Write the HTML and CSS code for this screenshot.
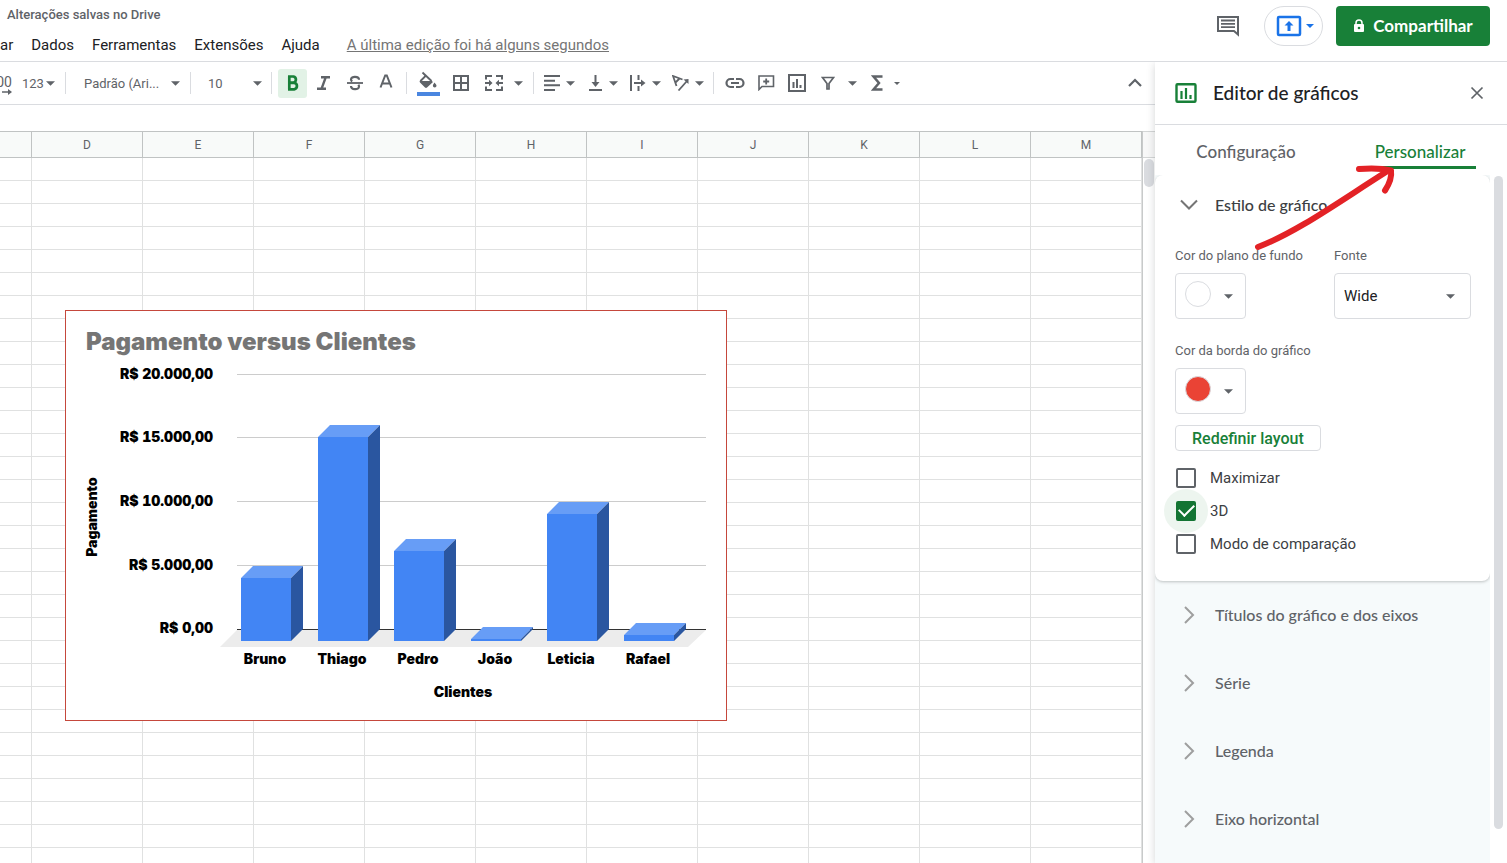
FILE: index.html
```html
<!DOCTYPE html>
<html lang="pt-BR">
<head>
<meta charset="utf-8">
<title>Planilha</title>
<link rel="stylesheet" href="styles.css">
</head>
<body>
<header class="top">
  <div class="top-left">
    <div class="saved">Alterações salvas no Drive</div>
    <nav class="menu">
      <button class="menu-item">ar</button>
      <button class="menu-item">Dados</button>
      <button class="menu-item">Ferramentas</button>
      <button class="menu-item">Extensões</button>
      <button class="menu-item">Ajuda</button>
      <a class="last-edit" href="#">A última edição foi há alguns segundos</a>
    </nav>
  </div>
  <div class="top-right">
    <button class="plain" aria-label="Comentários">
      <svg width="24" height="24" viewBox="0 0 24 24" fill="none" stroke="#5f6368" stroke-width="2"><path d="M2 3h20v17.500l-4-3.500H2z"/><path d="M5 6.500h14M5 9.800h14M5 13.200h14" stroke-width="1.800"/></svg>
    </button>
    <button class="present" aria-label="Apresentar">
      <svg width="26" height="22" viewBox="0 0 26 22"><rect x="2" y="2" width="22" height="18" rx="1" fill="none" stroke="#1a73e8" stroke-width="2.500"/><path d="M13 6l4.500 4.500h-3V16h-3v-5.500h-3z" fill="#1a73e8"/></svg>
      <svg width="8" height="4" viewBox="0 0 8 4"><path d="M0 0h8L4 4z" fill="#1a73e8"/></svg>
    </button>
    <button class="share">
      <svg width="12" height="14" viewBox="0 0 12 14"><path d="M3 6V4a3 3 0 0 1 6 0v2" fill="none" stroke="#fff" stroke-width="1.500"/><rect x="1" y="5" width="10" height="8" rx="1" fill="#fff"/><circle cx="6" cy="9" r="1.300" fill="#188038"/></svg>
      <span class="share-text">Compartilhar</span>
    </button>
  </div>
</header>

<div class="workspace">
  <main class="main">
    <div class="toolbar">
      <div class="group">
        <button class="decimals" aria-label="Aumentar casas decimais">
          <span>00</span>
          <svg width="10" height="6" viewBox="0 0 10 6"><path d="M0 3h7" stroke="#5f6368" stroke-width="1.500"/><path d="M6 0l4 3-4 3z" fill="#5f6368"/></svg>
        </button>
        <button class="format">123 <svg class="caret" viewBox="0 0 8 4"><path d="M0 0h8L4 4z"/></svg></button>
      </div>
      <span class="sep"></span>
      <label class="pick pick-font"><select aria-label="Fonte"><option>Padrão (Ari...</option></select><svg class="caret" viewBox="0 0 8 4"><path d="M0 0h8L4 4z"/></svg></label>
      <span class="sep"></span>
      <label class="pick pick-size"><select aria-label="Tamanho da fonte"><option>10</option></select><svg class="caret" viewBox="0 0 8 4"><path d="M0 0h8L4 4z"/></svg></label>
      <span class="sep"></span>
      <div class="group">
        <button class="tool tool-on" aria-label="Negrito"><svg width="14" height="16" viewBox="0 0 14 16"><path d="M2 1.500h5.500a3.200 3.200 0 0 1 0 6.200H3M2.200 7.800h6a3.300 3.300 0 0 1 0 6.500H2M3.300 1.500v12.800" fill="none" stroke="#188038" stroke-width="2.700"/></svg></button>
        <button class="tool" aria-label="Itálico"><svg width="16" height="16" viewBox="0 0 16 16" fill="none" stroke="#5f6368" stroke-width="2.400"><path d="M5 2.200h9M1 13.800h9M9.800 2.200L5.500 13.800"/></svg></button>
        <button class="tool" aria-label="Tachado"><svg width="16" height="16" viewBox="0 0 16 16" fill="none" stroke="#5f6368"><path d="M0 8h16" stroke-width="1.800"/><path d="M12 4.800C12 1 4 .800 4 4.500c0 1 .500 1.500 1.200 2M4 11c0 4 8 4.300 8 .500 0-.800-.300-1.300-.700-1.800" stroke-width="2.200"/></svg></button>
        <button class="tool" aria-label="Cor do texto"><svg width="14" height="18" viewBox="0 0 14 18"><path d="M1.500 13.500L6.200 1.500h1.600l4.700 12M3.500 9.500h7" fill="none" stroke="#5f6368" stroke-width="2"/></svg></button>
      </div>
      <span class="sep"></span>
      <div class="group group-wide">
        <button class="tool" aria-label="Cor de preenchimento"><svg width="24" height="26" viewBox="0 0 24 26"><path d="M6 3l11 9-6 5.500a1.500 1.500 0 0 1-2 0L4 12.500a1.500 1.500 0 0 1 0-2L9 6" fill="#5f6368"/><path d="M10 5.500L15 11H5z" fill="#fff"/><path d="M6.500 2.500L15.500 11" stroke="#5f6368" stroke-width="1.800"/><path d="M10 5.500L4.500 11" stroke="#5f6368" stroke-width="1.800"/><path d="M18.500 12.500c1.500 2 2 2.600 2 3.200a1.800 1.800 0 0 1-3.600 0c0-.600.300-1.200 1.600-3.200z" fill="#5f6368"/><path d="M1 22h23v4H1z" fill="#4a86e0"/></svg></button>
        <button class="tool" aria-label="Bordas"><svg width="16" height="16" viewBox="0 0 16 16"><path d="M1 1h14v14H1zM8 1v14M1 8h14" fill="none" stroke="#5f6368" stroke-width="2"/></svg></button>
        <button class="tool" aria-label="Mesclar células"><svg width="20" height="18" viewBox="0 0 20 18"><path d="M8 2H2v3.500M12 2h6v3.500M2 12.500V16h6M18 12.500V16h-6M1 9h5M19 9h-5" fill="none" stroke="#5f6368" stroke-width="2"/><path d="M5 5.800L8.500 9 5 12.200zM15 5.800L11.500 9l3.500 3.200z" fill="#5f6368"/></svg></button>
        <button class="drop" aria-label="Opções de mesclagem"><svg class="caret" viewBox="0 0 8 4"><path d="M0 0h8L4 4z"/></svg></button>
      </div>
      <span class="sep"></span>
      <div class="group group-split">
        <button class="split" aria-label="Alinhamento horizontal"><svg width="18" height="18" viewBox="0 0 18 18"><path d="M1 2h16M1 6.700h11M1 11.300h16M1 16h11" stroke="#5f6368" stroke-width="2"/></svg><svg class="caret" viewBox="0 0 8 4"><path d="M0 0h8L4 4z"/></svg></button>
        <button class="split" aria-label="Alinhamento vertical"><svg width="18" height="16" viewBox="0 0 18 16"><path d="M3 15h13M9.500 0v8" stroke="#5f6368" stroke-width="2"/><path d="M5.500 7h8l-4 5z" fill="#5f6368"/></svg><svg class="caret" viewBox="0 0 8 4"><path d="M0 0h8L4 4z"/></svg></button>
        <button class="split" aria-label="Ajuste de texto"><svg width="18" height="16" viewBox="0 0 18 16"><path d="M2 0v16M9.500 0v5M9.500 11v5M5 8h8" stroke="#5f6368" stroke-width="2"/><path d="M12 4.500L16.500 8 12 11.500z" fill="#5f6368"/></svg><svg class="caret" viewBox="0 0 8 4"><path d="M0 0h8L4 4z"/></svg></button>
        <button class="split" aria-label="Rotação de texto"><svg width="18" height="16" viewBox="0 0 18 16" fill="none" stroke="#5f6368" stroke-width="1.800"><path d="M4.500 11L1 1l9.500 3.500M3.500 7.500l4-4"/><path d="M6.500 15.500L15 6"/><path d="M11.500 4.500l5-.500v5z" fill="#5f6368" stroke="none"/></svg><svg class="caret" viewBox="0 0 8 4"><path d="M0 0h8L4 4z"/></svg></button>
      </div>
      <span class="sep"></span>
      <div class="group">
        <button class="tool" aria-label="Inserir link"><svg width="20" height="12" viewBox="0 0 20 12"><path d="M9 2H5.500a4 4 0 0 0 0 8H9M11 2h3.500a4 4 0 0 1 0 8H11M6 6h8" fill="none" stroke="#5f6368" stroke-width="2.200"/></svg></button>
        <button class="tool" aria-label="Inserir comentário"><svg width="18" height="16" viewBox="0 0 18 16"><path d="M2 14.500V1h14.500v10.500H5z" fill="none" stroke="#5f6368" stroke-width="1.600"/><path d="M9.200 3.500v6M6.200 6.500h6" stroke="#5f6368" stroke-width="1.800"/></svg></button>
        <button class="tool" aria-label="Inserir gráfico"><svg width="18" height="18" viewBox="0 0 18 18"><rect x="1" y="1" width="16" height="16" fill="none" stroke="#5f6368" stroke-width="2"/><path d="M5.500 8v6M9 5v9M12.500 11v3" stroke="#5f6368" stroke-width="2"/></svg></button>
        <button class="tool" aria-label="Filtro"><svg width="14" height="14" viewBox="0 0 14 14"><path d="M1.500 1.500h11L8 7.500V13H6V7.500z" fill="none" stroke="#5f6368" stroke-width="1.700"/></svg></button>
        <button class="drop drop-filter" aria-label="Opções de filtro"><svg class="caret" viewBox="0 0 8 4"><path d="M0 0h8L4 4z"/></svg></button>
        <button class="tool" aria-label="Funções"><svg width="12" height="16" viewBox="0 0 12 16"><path d="M11.500 1.500H2.500L8 8l-5.500 6.500h9" fill="none" stroke="#5f6368" stroke-width="2.500"/></svg></button>
        <button class="drop drop-more" aria-label="Mais funções"><svg class="caret-small" viewBox="0 0 8 4"><path d="M0 0h8L4 4z"/></svg></button>
      </div>
      <button class="tool collapse" aria-label="Ocultar menus"><svg width="14" height="10" viewBox="0 0 14 10"><path d="M1 8l6-6 6 6" fill="none" stroke="#5f6368" stroke-width="2.200"/></svg></button>
    </div>
    <div class="formula"></div>
    <div class="sheet">
      <table class="cells">
        <colgroup><col class="col-cut"><col span="10"></colgroup>
        <thead><tr><th></th><th>D</th><th>E</th><th>F</th><th>G</th><th>H</th><th>I</th><th>J</th><th>K</th><th>L</th><th>M</th></tr></thead>
        <tbody id="rows"></tbody>
      </table>
      <div class="sheet-scroll"><div class="sheet-scroll-head"></div><div class="sheet-thumb"></div></div>

      <svg class="chart" width="662" height="411" viewBox="0 0 662 411" role="img" aria-label="Pagamento versus Clientes">
        <rect x="0.500" y="0.500" width="661" height="410" fill="#fff" stroke="#c5483c"/>
        <text class="chart-title" x="21" y="40">Pagamento versus Clientes</text>
        <path d="M172 320h469l-18 17H155z" fill="#ececec"/>
        <path d="M172 64.500h469M172 127.500h469M172 191.500h469M172 255.500h469" stroke="#ccc"/>
        <path d="M172 319.500h469" stroke="#333"/>
        <g class="chart-value">
          <text x="148" y="69">R$ 20.000,00</text>
          <text x="148" y="132">R$ 15.000,00</text>
          <text x="148" y="196">R$ 10.000,00</text>
          <text x="148" y="260">R$ 5.000,00</text>
          <text x="148" y="323">R$ 0,00</text>
        </g>
        <path fill="#4285f4" d="M176 268h50v63h-50zM253 127h50v204h-50zM329 241h50v90h-50zM406 329h50v2h-50zM482 204h50v127h-50zM559 325h50v6h-50z"/>
        <path fill="#679df6" d="M176 268l12-12h50l-12 12zM253 127l12-12h50l-12 12zM329 241l12-12h50l-12 12zM406 329l12-12h50l-12 12zM482 204l12-12h50l-12 12zM559 325l12-12h50l-12 12z"/>
        <path fill="#2a56a0" d="M226 268l12-12v63l-12 12zM303 127l12-12v204l-12 12zM379 241l12-12v90l-12 12zM456 329l12-12v2l-12 12zM532 204l12-12v127l-12 12zM609 325l12-12v6l-12 12z"/>
        <g class="chart-name">
          <text x="200" y="354">Bruno</text>
          <text x="277" y="354">Thiago</text>
          <text x="353" y="354">Pedro</text>
          <text x="430" y="354">João</text>
          <text x="506" y="354">Leticia</text>
          <text x="583" y="354">Rafael</text>
          <text x="398" y="387">Clientes</text>
          <text transform="translate(32 207) rotate(-90)">Pagamento</text>
        </g>
      </svg>
    </div>
  </main>

  <aside class="panel">
    <div class="panel-head">
      <svg width="22" height="20" viewBox="0 0 22 20"><rect x="1.500" y="1.200" width="19" height="17.600" rx="1" fill="none" stroke="#188038" stroke-width="2.400"/><path d="M6.500 8v8M11 5v11M15.500 12v4" stroke="#188038" stroke-width="2.200"/></svg>
      <h2 class="panel-title">Editor de gráficos</h2>
      <button class="plain" aria-label="Fechar"><svg width="14" height="14" viewBox="0 0 14 14"><path d="M1.500 1.500l11 11M12.500 1.500l-11 11" stroke="#5f6368" stroke-width="1.700"/></svg></button>
    </div>
    <div class="tabs" role="tablist">
      <button class="tab" role="tab">Configuração</button>
      <button class="tab tab-on" role="tab" aria-selected="true">Personalizar</button>
    </div>
    <div class="panel-body">
      <div class="sections">
        <section class="card">
          <button class="section-head section-open"><svg width="18" height="12" viewBox="0 0 18 12"><path d="M1 1.500l8 8 8-8" fill="none" stroke="#757575" stroke-width="2"/></svg><span class="section-text">Estilo de gráfico</span></button>
          <div class="fields">
            <div class="field">
              <label class="field-label" for="bg">Cor do plano de fundo</label>
              <button class="color" id="bg"><span class="dot"></span><svg class="caret" viewBox="0 0 8 4"><path d="M0 0h8L4 4z"/></svg></button>
            </div>
            <div class="field">
              <label class="field-label" for="font">Fonte</label>
              <div class="pick pick-wide"><select id="font"><option>Wide</option></select><svg class="caret" viewBox="0 0 8 4"><path d="M0 0h8L4 4z"/></svg></div>
            </div>
            <div class="field">
              <label class="field-label" for="border">Cor da borda do gráfico</label>
              <button class="color" id="border"><span class="dot dot-red"></span><svg class="caret" viewBox="0 0 8 4"><path d="M0 0h8L4 4z"/></svg></button>
            </div>
          </div>
          <button class="reset">Redefinir layout</button>
          <div class="checks">
            <label class="check"><input type="checkbox">Maximizar</label>
            <label class="check"><input type="checkbox" checked>3D</label>
            <label class="check"><input type="checkbox">Modo de comparação</label>
          </div>
        </section>
        <button class="section-head"><svg width="18" height="18" viewBox="0 0 18 18"><path d="M5 1l8 8-8 8" fill="none" stroke="#9e9e9e" stroke-width="2"/></svg><span class="section-text">Títulos do gráfico e dos eixos</span></button>
        <button class="section-head"><svg width="18" height="18" viewBox="0 0 18 18"><path d="M5 1l8 8-8 8" fill="none" stroke="#9e9e9e" stroke-width="2"/></svg><span class="section-text">Série</span></button>
        <button class="section-head"><svg width="18" height="18" viewBox="0 0 18 18"><path d="M5 1l8 8-8 8" fill="none" stroke="#9e9e9e" stroke-width="2"/></svg><span class="section-text">Legenda</span></button>
        <button class="section-head"><svg width="18" height="18" viewBox="0 0 18 18"><path d="M5 1l8 8-8 8" fill="none" stroke="#9e9e9e" stroke-width="2"/></svg><span class="section-text">Eixo horizontal</span></button>
      </div>
      <div class="panel-scroll"></div>
    </div>
    <svg class="arrow" width="144" height="92" viewBox="0 0 144 92" fill="none" stroke="#e32226" stroke-width="6" stroke-linecap="round" stroke-linejoin="round"><path d="M6 86C45 71 85 42 134 11"/><path d="M107 8c12-1 22-1 32 1.500 1 7-2 14-6 20"/></svg>
  </aside>
</div>
<script src="sheet.js"></script>
</body>
</html>
```

FILE: styles.css
```css
* { box-sizing: border-box; }

body {
  margin: 0;
  height: 100vh;
  display: flex;
  flex-direction: column;
  overflow: hidden;
  background: #fff;
  color: #202124;
  font-family: Roboto, "Liberation Sans", sans-serif;
  font-size: 15px;
}

button, select {
  font: inherit;
  color: inherit;
  background: none;
  border: 0;
  padding: 0;
  margin: 0;
}

svg { flex: none; }

.top {
  display: flex;
  justify-content: space-between;
  height: 62px;
  flex: none;
  border-bottom: 1px solid #dadce0;
}
.top-left { padding-top: 5px; }
.saved {
  padding-left: 7px;
  font-size: 13px;
  line-height: 20px;
  font-weight: 500;
  color: #5f6368;
}
.menu {
  display: flex;
  align-items: center;
  gap: 18px;
  height: 40px;
  font-size: 15px;
}
.last-edit { margin-left: 9px; color: #757575; }
.top-right {
  display: flex;
  align-items: center;
  height: 52px;
  gap: 13px;
  padding-right: 17px;
}
.plain { display: flex; }
.present {
  display: flex;
  align-items: center;
  gap: 4px;
  height: 40px;
  margin-left: 11px;
  padding: 0 8px 0 11px;
  border: 1px solid #dadce0;
  border-radius: 20px;
}
.share {
  display: flex;
  align-items: center;
  justify-content: center;
  gap: 8px;
  width: 154px;
  height: 40px;
  border-radius: 4px;
  background: #188038;
  color: #fff;
  font-family: Lato, sans-serif;
  font-size: 17px;
  font-weight: 700;
}
.share-text { padding-bottom: 2px; }

.workspace { flex: 1; display: flex; min-height: 0; }
.main { flex: 1; min-width: 0; display: flex; flex-direction: column; }

.toolbar {
  display: flex;
  align-items: center;
  height: 43px;
  flex: none;
  border-bottom: 1px solid #dadce0;
  color: #5f6368;
  font-size: 13px;
}
.group { display: flex; align-items: center; gap: 2px; }
.group-wide { gap: 4px; padding-right: 3px; }
.group-split { gap: 5px; }
.sep { width: 1px; height: 22px; margin: 0 6px; background: #dadce0; flex: none; }
.tool {
  display: flex;
  align-items: center;
  justify-content: center;
  width: 29px;
  height: 29px;
  border-radius: 3px;
}
.tool-on { background: #e2f2e6; }
.drop { display: flex; justify-content: center; width: 12px; }
.drop-filter { margin: 0 2px; }
.drop-more { width: 8px; }
.split { display: flex; align-items: center; gap: 5px; width: 38px; padding-left: 3px; }
.caret { width: 9px; height: 5px; fill: #5f6368; }
.caret-small { width: 6px; height: 3px; fill: #5f6368; }
.decimals {
  display: flex;
  flex-direction: column;
  align-items: flex-end;
  width: 12px;
  padding-top: 4px;
  font-size: 14px;
  line-height: 14px;
}
.format { display: flex; align-items: center; gap: 2px; padding-left: 8px; width: 45px; }
.collapse { margin-left: auto; margin-right: 6px; }

.pick { position: relative; display: flex; align-items: center; }
.pick select { appearance: none; width: 100%; height: 29px; }
.pick .caret { position: absolute; right: 8px; pointer-events: none; }
.pick-font { width: 112px; }
.pick-font select { padding-left: 12px; }
.pick-font .caret { right: 4px; }
.pick-size { width: 68px; }
.pick-size select { padding-left: 11px; }
.pick-size .caret { right: 3px; }
.pick-wide { width: 137px; height: 46px; border: 1px solid #dadce0; border-radius: 4px; }
.pick-wide select { height: 44px; padding-left: 9px; font-size: 15px; color: #202124; }
.pick-wide .caret { right: 15px; }

.formula { height: 26px; flex: none; }

.sheet { position: relative; flex: 1; min-height: 0; display: flex; overflow: hidden; }
.cells {
  flex: 1;
  align-self: flex-start;
  table-layout: fixed;
  width: 100%;
  border-collapse: separate;
  border-spacing: 0;
}
.col-cut { width: 32px; }
.cells th {
  height: 27px;
  padding: 0;
  border: solid #c0c3c3;
  border-width: 1px 1px 1px 0;
  background: #f8faf9;
  color: #5f6368;
  font-size: 12px;
  font-weight: 400;
}
.cells td { height: 23px; padding: 0; border: solid #e0e1e1; border-width: 0 1px 1px 0; }
.sheet-scroll { width: 13px; border-left: 1px solid #c8caca; background: #fff; }
.sheet-scroll-head { height: 27px; border: solid #d4d6d6; border-width: 1px 0; background: #f8f8f8; }
.sheet-thumb { width: 10px; height: 28px; margin: 1px; border-radius: 5px; background: #dadce0; }

.chart { position: absolute; left: 65px; top: 179px; font-family: Inter, "Liberation Sans", sans-serif; font-weight: 900; }
.chart-title { font-size: 24px; fill: #757575; }
.chart-value { font-size: 14px; text-anchor: end; font-variant-numeric: tabular-nums; }
.chart-name { font-size: 14px; text-anchor: middle; }

.panel {
  position: relative;
  width: 352px;
  flex: none;
  display: flex;
  flex-direction: column;
  background: #fff;
  box-shadow: 0 2px 8px rgba(60, 64, 67, 0.22);
  clip-path: inset(0 0 0 -12px);
  font-family: Lato, Roboto, sans-serif;
  font-weight: 500;
}
.panel-head {
  display: flex;
  align-items: center;
  height: 63px;
  flex: none;
  padding: 0 23px 0 20px;
  border-bottom: 1px solid #dadce0;
}
.panel-title { flex: 1; margin: 0 0 0 16px; padding-bottom: 2px; font-size: 19px; font-weight: 500; }
.tabs { display: flex; height: 50px; flex: none; padding: 8px 0 6px 4px; font-size: 17px; color: #5f6368; }
.tab { flex: 1; display: flex; justify-content: center; align-items: center; }
.tab-on { color: #188038; position: relative; }
.tab-on::after { content: ""; position: absolute; left: 34px; right: 31px; bottom: 0; height: 3px; background: #188038; }
.panel-body { flex: 1; min-height: 0; display: flex; gap: 4px; }
.sections { flex: 1; overflow: hidden; background: #f6fafb; }
.card {
  padding-bottom: 21px;
  background: #fff;
  border-radius: 8px;
  box-shadow: 0 1px 3px rgba(60, 64, 67, 0.3);
  font-family: Roboto, sans-serif;
  font-weight: 400;
}
.section-head {
  display: flex;
  align-items: center;
  gap: 17px;
  width: 100%;
  height: 68px;
  padding-left: 25px;
  color: #5f6368;
  font-family: Lato, Roboto, sans-serif;
  font-size: 16px;
  font-weight: 500;
}
.section-open { height: 60px; color: #3c4043; }
.section-text { padding-bottom: 2px; }
.fields { display: grid; grid-template-columns: 159px 137px; row-gap: 22px; padding: 11px 0 0 20px; }
.field-label { display: block; line-height: 20px; margin-bottom: 7px; font-size: 13px; color: #5f6368; white-space: nowrap; }
.color {
  display: flex;
  align-items: center;
  gap: 13px;
  width: 71px;
  height: 46px;
  padding-left: 9px;
  border: 1px solid #dadce0;
  border-radius: 4px;
}
.dot { width: 26px; height: 26px; margin-bottom: 4px; border: 1px solid #dadce0; border-radius: 50%; background: #fff; }
.dot-red { background: #ea4335; }
.reset {
  display: block;
  height: 26px;
  margin: 11px 0 0 20px;
  padding: 0 16px;
  border: 1px solid #dadce0;
  border-radius: 4px;
  color: #188038;
  font-size: 16px;
  font-weight: 500;
}
.checks { padding: 10px 0 0 21px; }
.check { display: flex; align-items: center; gap: 14px; height: 33px; color: #3c4043; font-size: 15px; }
.check input {
  appearance: none;
  position: relative;
  width: 20px;
  height: 20px;
  margin: 0;
  border: 2px solid #5f6368;
  border-radius: 2px;
}
.check input:checked {
  display: grid;
  place-items: center;
  border-color: #137333;
  background: #137333;
}
.check input:checked::before {
  content: "";
  position: absolute;
  left: -14px;
  top: -14px;
  width: 44px;
  height: 44px;
  border-radius: 50%;
  background: rgba(24, 128, 56, 0.08);
}
.check input:checked::after {
  content: "";
  width: 13px;
  height: 7px;
  margin-bottom: 4px;
  border: solid #fff;
  border-width: 0 0 2px 2px;
  rotate: -45deg;
}
.panel-scroll { width: 9px; margin: 1px 4px 34px 0; border-radius: 5px; background: #dadce0; }
.arrow { position: absolute; left: 97px; top: 99px; pointer-events: none; }
```

FILE: sheet.js
```js
const body = document.getElementById('rows');
for (let r = 0; r < 40; r++) {
  const row = body.insertRow();
  for (let c = 0; c < 11; c++) row.insertCell();
}
```
